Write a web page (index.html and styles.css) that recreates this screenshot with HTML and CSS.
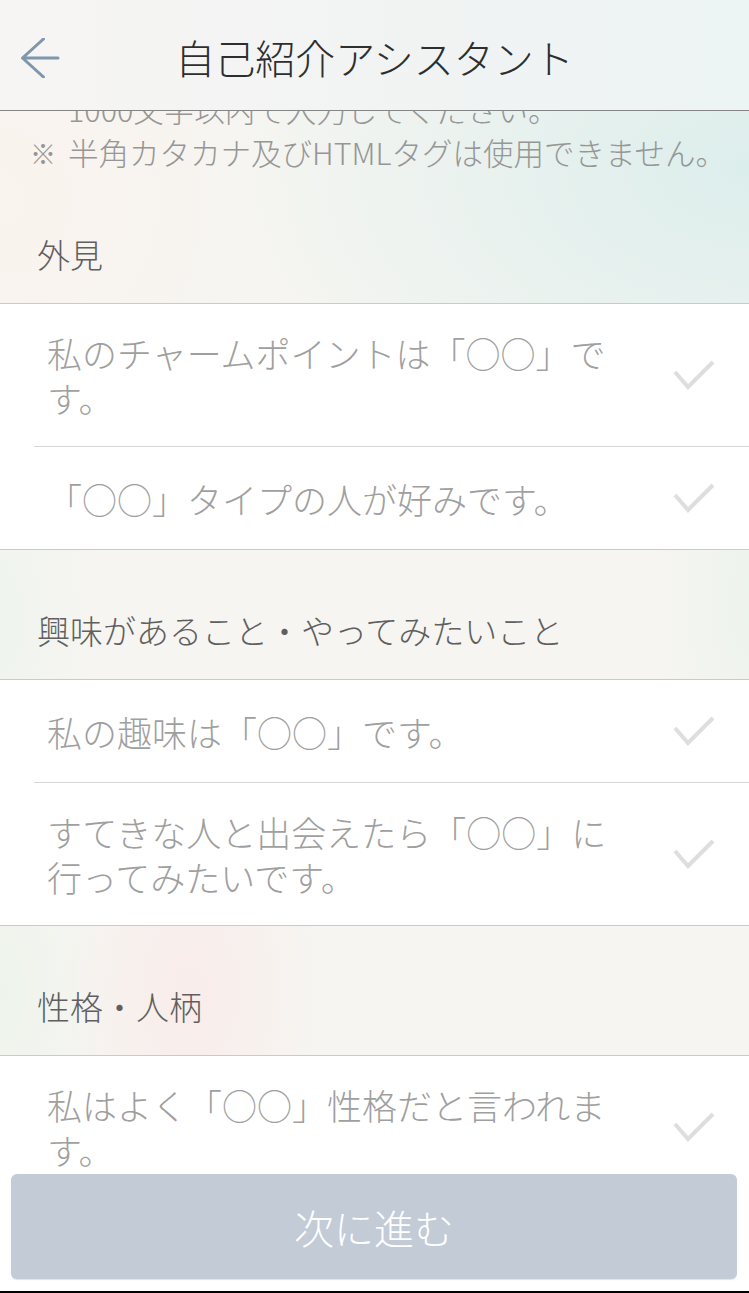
FILE: index.html
```
<!doctype html>
<html>

<head>
    <meta charset="utf-8">
    <title>自己紹介アシスタント</title>
    <!--Page styling-->
    <link rel="stylesheet" href="styles.css">
</head>

<body>
<!--Top bar, stays over the list-->
<header class="topBar">
    <a class="back" href="#">
        <svg width="40" height="40" viewBox="0 0 40 40"><path d="M23.5 1 L2.5 20 L23.5 39 M2.5 20 H38" fill="none" stroke="#7f96ad" stroke-width="3" stroke-linecap="round" stroke-linejoin="round"/></svg>
    </a>
    <h1 class="title">自己紹介アシスタント</h1>
</header>

<main class="content">
    <!--Notes about the text (first line sits under the top bar)-->
    <ul class="notes">
        <li><span class="mark"></span><span>1000文字以内で入力してください。</span></li>
        <li><span class="mark">※</span><span>半角カタカナ及びHTMLタグは使用できません。</span></li>
    </ul>

    <section class="group">
        <h2 class="groupTitle">外見</h2>
        <ul class="phrases">
            <li class="phrase"><span class="phraseText">私のチャームポイントは「○○」です。</span><svg class="check" viewBox="0 0 42 30"><path d="M2 12 L15 27 L40 2" fill="none" stroke="#dedede" stroke-width="4"/></svg></li>
            <li class="phrase"><span class="phraseText">「○○」タイプの人が好みです。</span><svg class="check" viewBox="0 0 42 30"><path d="M2 12 L15 27 L40 2" fill="none" stroke="#dedede" stroke-width="4"/></svg></li>
        </ul>
    </section>

    <section class="group">
        <h2 class="groupTitle">興味があること・やってみたいこと</h2>
        <ul class="phrases">
            <li class="phrase"><span class="phraseText">私の趣味は「○○」です。</span><svg class="check" viewBox="0 0 42 30"><path d="M2 12 L15 27 L40 2" fill="none" stroke="#dedede" stroke-width="4"/></svg></li>
            <li class="phrase"><span class="phraseText">すてきな人と出会えたら「○○」に行ってみたいです。</span><svg class="check" viewBox="0 0 42 30"><path d="M2 12 L15 27 L40 2" fill="none" stroke="#dedede" stroke-width="4"/></svg></li>
        </ul>
    </section>

    <section class="group">
        <h2 class="groupTitle">性格・人柄</h2>
        <ul class="phrases">
            <li class="phrase"><span class="phraseText">私はよく「○○」性格だと言われます。</span><svg class="check" viewBox="0 0 42 30"><path d="M2 12 L15 27 L40 2" fill="none" stroke="#dedede" stroke-width="4"/></svg></li>
        </ul>
    </section>
</main>

<!--Bottom button-->
<footer class="actionBar">
    <button type="button" class="next">次に進む</button>
</footer>
</body>

</html>
```

FILE: styles.css
```
body{margin:0; font-family:"Noto Sans CJK JP", "Noto Sans", sans-serif; font-weight:300; background-color:#f6f5f1;
    background-image:
        radial-gradient(ellipse 520px 330px at 100% 170px, #dceeec, rgba(220,238,236,0)),
        radial-gradient(ellipse 260px 260px at 0 200px, #faf3ee, rgba(250,243,238,0)),
        radial-gradient(ellipse 90px 240px at 0 620px, #eff4ee, rgba(239,244,238,0)),
        radial-gradient(ellipse 90px 240px at 100% 600px, #edf3ed, rgba(237,243,237,0)),
        radial-gradient(ellipse 130px 200px at 190px 990px, #f9ecea, rgba(249,236,234,0)),
        radial-gradient(ellipse 110px 200px at 0 990px, #eef4ec, rgba(238,244,236,0));
    background-repeat:no-repeat;}
ul{list-style:none; margin:0; padding:0;}

/*Top bar*/
.topBar{position:fixed; top:0; left:0; right:0; z-index:2; height:110px; display:grid; grid-template-columns:80px 1fr 80px; align-items:center; background:linear-gradient(90deg, #f6f5f3, #f1f3f3 60%, #edf4f4); border-bottom:1px solid #858585;}
.back{display:flex; padding-left:20px; padding-top:6px;}
.title{margin:0; text-align:center; font-size:40px; font-weight:300; color:#2e2e2e; padding-top:4px;}

/*Notes*/
.notes{margin-top:88px; color:#969696; font-size:30.5px; line-height:43px;}
.notes li{display:flex; padding-left:30px;}
.notes .mark{flex:none; width:38px; font-size:26px;}

/*Groups*/
.groupTitle{margin:0; padding:58px 37px 27px; font-size:33px; line-height:44px; font-weight:300; color:#5f5f5f; border-bottom:1px solid #cacaca;}
.phrases{background-color:#fff; border-bottom:1px solid #cacaca;}
.phrase{display:flex; align-items:center; min-height:50px; padding:26px 34px 26px 13px; margin-left:34px; border-bottom:1px solid #d6d6d6;}
.phrase:last-child{border-bottom:none;}
.phraseText{flex:0 1 575px; font-size:35px; line-height:45px; color:#9f9f9f;}
.check{flex:none; width:42px; height:30px; margin-left:auto;}

/*Bottom button*/
.actionBar{position:fixed; left:0; right:0; bottom:0; z-index:2; padding:4px 12px 12px 11px; background-color:#fff; border-bottom:2px solid #000;}
.next{display:block; width:100%; height:105px; border:none; border-radius:6px; background-color:#c3cbd7; box-shadow:0 1px 1px rgba(0,0,0,0.12); color:#fff; font-family:"Noto Sans CJK JP", sans-serif; font-size:40px; font-weight:300; padding:0;}
```
